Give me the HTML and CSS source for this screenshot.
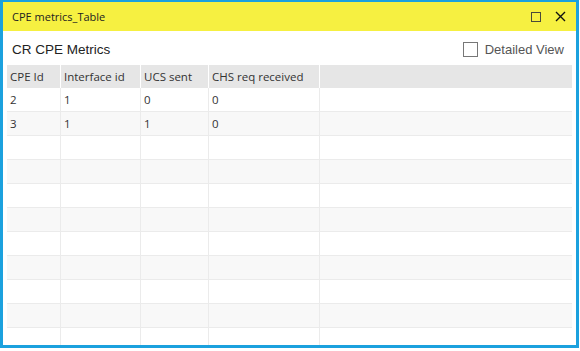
FILE: index.html
```html
<!DOCTYPE html>
<html lang="en">
  <head>
    <meta charset="UTF-8" />
    <title>CPE metrics_Table</title>
    <link rel="stylesheet" href="styles.css">
  </head>
  <body>
    <div class="window">
      <div class="titlebar">
        <span class="title">CPE metrics_Table</span>
        <div class="controls">
          <!-- maximize -->
          <svg width="10" height="10" viewBox="0 0 10 10">
            <rect x="0.5" y="0.5" width="9" height="9" fill="none" stroke="#4a4a3a" stroke-width="1" />
          </svg>
          <!-- close -->
          <svg width="11" height="11" viewBox="0 0 11 11">
            <path d="M1 1 L10 10 M10 1 L1 10" stroke="#111" stroke-width="1.4" fill="none" />
          </svg>
        </div>
      </div>
      <div class="content">
        <div class="toolbar">
          <span class="heading">CR CPE Metrics</span>
          <label class="check">
            <span class="box"></span>
            Detailed View
          </label>
        </div>
        <table class="grid">
          <colgroup>
            <col style="width: 54px" />
            <col style="width: 80px" />
            <col style="width: 68px" />
            <col style="width: 111px" />
            <col />
          </colgroup>
          <thead>
            <tr>
              <th>CPE Id</th>
              <th>Interface id</th>
              <th>UCS sent</th>
              <th>CHS req received</th>
              <th></th>
            </tr>
          </thead>
          <tbody>
            <tr><td>2</td><td>1</td><td>0</td><td>0</td><td></td></tr>
            <tr><td>3</td><td>1</td><td>1</td><td>0</td><td></td></tr>
            <tr><td></td><td></td><td></td><td></td><td></td></tr>
            <tr><td></td><td></td><td></td><td></td><td></td></tr>
            <tr><td></td><td></td><td></td><td></td><td></td></tr>
            <tr><td></td><td></td><td></td><td></td><td></td></tr>
            <tr><td></td><td></td><td></td><td></td><td></td></tr>
            <tr><td></td><td></td><td></td><td></td><td></td></tr>
            <tr><td></td><td></td><td></td><td></td><td></td></tr>
            <tr><td></td><td></td><td></td><td></td><td></td></tr>
            <tr><td></td><td></td><td></td><td></td><td></td></tr>
          </tbody>
        </table>
      </div>
    </div>
  </body>
</html>
```

FILE: styles.css
```css
html, body {
  margin: 0;
  padding: 0;
  background-color: #ffffff;
}
body {
  font-family: "Open Sans", "Noto Sans", sans-serif;
  color: #333;
}
.window {
  width: 573px;
  height: 343px;
  border: 3px solid #1ba1de;
  border-top-width: 2px;
  background-color: white;
  display: flex;
  flex-direction: column;
  overflow: hidden;
}
.titlebar {
  height: 29px;
  flex: none;
  background-color: #f6f041;
  display: flex;
  align-items: center;
  justify-content: space-between;
  padding: 0 10px 0 9px;
}
.title {
  font-size: 11px;
  color: #222;
}
.controls {
  display: flex;
  align-items: center;
  gap: 14px;
}
.controls svg {
  display: block;
}
.content {
  flex: 1;
  padding: 0 4px;
  overflow: hidden;
}
.toolbar {
  height: 32px;
  padding: 2px 8px 0 5px;
  display: flex;
  align-items: center;
  justify-content: space-between;
  font-family: "Liberation Sans", Arial, sans-serif;
  font-size: 13.5px;
}
.heading {
  color: #222;
}
.check {
  display: flex;
  align-items: center;
  gap: 7px;
  color: #555;
  font-size: 13px;
}
.box {
  width: 13px;
  height: 13px;
  border: 1px solid #777;
  background: white;
}
.grid {
  width: 565px;
  table-layout: fixed;
  border-collapse: separate;
  border-spacing: 0;
  font-size: 11.5px;
}
.grid th {
  height: 23px;
  background-color: #e6e6e6;
  border-right: 1px solid white;
  font-weight: normal;
  text-align: left;
  padding: 0 3px;
  color: #333;
}
.grid th:last-child {
  border-right: none;
}
.grid td {
  height: 23px;
  padding: 0 3px;
  border-right: 1px solid #ebebeb;
  border-bottom: 1px solid #ebebeb;
}
.grid td:last-child {
  border-right: none;
}
.grid tbody tr:nth-child(even) td {
  background-color: #f8f8f8;
}
```
